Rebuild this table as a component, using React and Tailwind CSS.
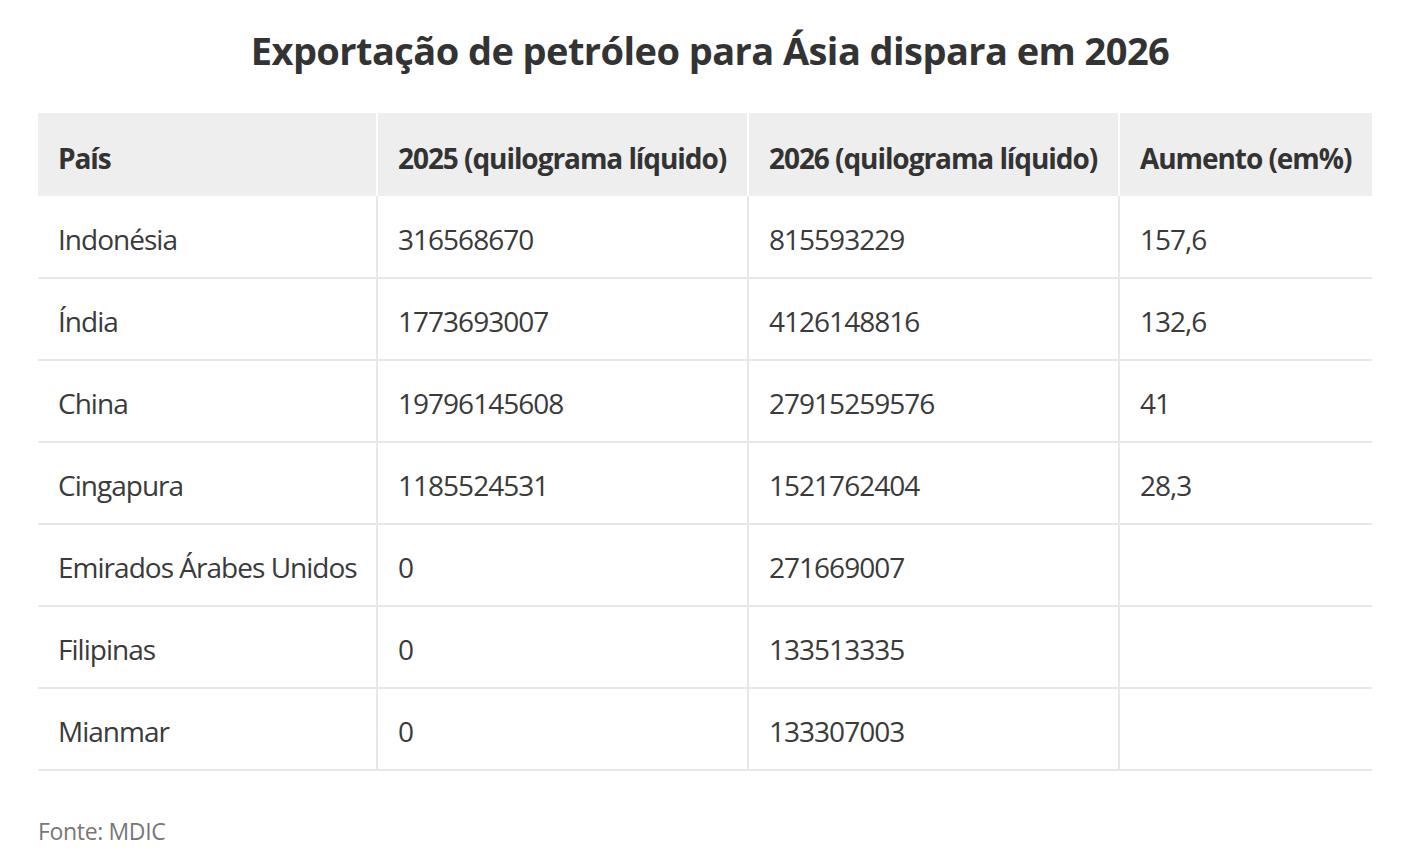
import React from 'react';

const rows = [
  ['Indonésia', '316568670', '815593229', '157,6'],
  ['Índia', '1773693007', '4126148816', '132,6'],
  ['China', '19796145608', '27915259576', '41'],
  ['Cingapura', '1185524531', '1521762404', '28,3'],
  ['Emirados Árabes Unidos', '0', '271669007', ''],
  ['Filipinas', '0', '133513335', ''],
  ['Mianmar', '0', '133307003', ''],
];

const headers = ['País', '2025 (quilograma líquido)', '2026 (quilograma líquido)', 'Aumento (em%)'];

const colW = ['w-[339px]', 'w-[371px]', 'w-[371px]', 'w-[253px]'];

export default function App() {
  return (
    <div className="w-[1420px] h-[860px] bg-white text-[#333] font-['Open_Sans',sans-serif]">
      <h1 className="pt-[26px] text-center text-[38px] leading-[48px] font-bold tracking-[-0.015em] text-[#333]">
        Exportação de petróleo para Ásia dispara em 2026
      </h1>

      <table className="mt-[39px] ml-[38px] w-[1334px] border-collapse table-fixed">
        <thead>
          <tr className="bg-[#eeeeee] h-[83px]">
            {headers.map((h, i) => (
              <th
                key={i}
                className={`${colW[i]} pl-[20px] pr-0 pt-[6px] whitespace-nowrap text-left text-[28px] font-bold tracking-[-0.038em] border-l-2 border-white first:border-l-0`}
              >
                {h}
              </th>
            ))}
          </tr>
        </thead>
        <tbody>
          {rows.map((r, ri) => (
            <tr key={ri} className="h-[82px] border-b-2 border-[#e8e8e8]">
              {r.map((c, ci) => (
                <td
                  key={ci}
                  className="pl-[20px] pr-0 pt-[4px] whitespace-nowrap text-[28px] font-normal text-[#3a3a3a] tracking-[-0.035em] border-l-2 border-[#e8e8e8] first:border-l-0"
                >
                  {c}
                </td>
              ))}
            </tr>
          ))}
        </tbody>
      </table>

      <p className="mt-[44px] ml-[38px] text-[23px] leading-[32px] text-[#777] tracking-[-0.015em]">Fonte: MDIC</p>
    </div>
  );
}
